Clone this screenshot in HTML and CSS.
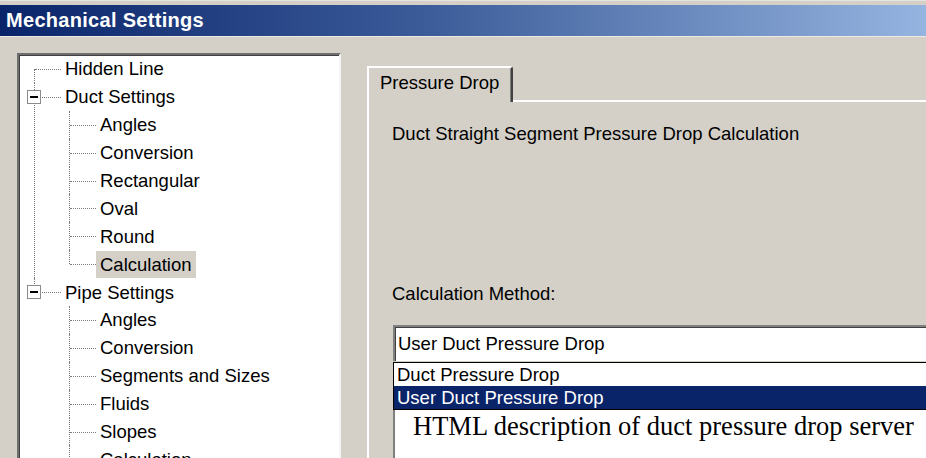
FILE: index.html
```html
<!DOCTYPE html>
<html>
<head>
<meta charset="utf-8">
<link rel="stylesheet" href="styles.css">
</head>
<body>
<div class="window">
  <div class="titlebar">Mechanical Settings</div>
  <div class="content">
    <div class="treebox">
      <ul class="tree">
        <li class="first"><div class="row"><span class="label">Hidden Line</span></div></li>
        <li>
          <div class="row open"><span class="toggle"></span><span class="label">Duct Settings</span></div>
          <ul>
            <li><div class="row"><span class="label">Angles</span></div></li>
            <li><div class="row"><span class="label">Conversion</span></div></li>
            <li><div class="row"><span class="label">Rectangular</span></div></li>
            <li><div class="row"><span class="label">Oval</span></div></li>
            <li><div class="row"><span class="label">Round</span></div></li>
            <li class="last"><div class="row"><span class="label selected">Calculation</span></div></li>
          </ul>
        </li>
        <li class="last">
          <div class="row open"><span class="toggle"></span><span class="label">Pipe Settings</span></div>
          <ul>
            <li><div class="row"><span class="label">Angles</span></div></li>
            <li><div class="row"><span class="label">Conversion</span></div></li>
            <li><div class="row"><span class="label">Segments and Sizes</span></div></li>
            <li><div class="row"><span class="label">Fluids</span></div></li>
            <li><div class="row"><span class="label">Slopes</span></div></li>
            <li><div class="row"><span class="label">Calculation</span></div></li>
          </ul>
        </li>
      </ul>
    </div>
    <div class="tabs">
      <div class="tabstrip">
        <div class="tab">Pressure Drop</div>
      </div>
      <div class="panel">
        <div class="heading">Duct Straight Segment Pressure Drop Calculation</div>
        <div class="method-label">Calculation Method:</div>
        <div class="combo">User Duct Pressure Drop</div>
        <div class="dropdown">
          <div class="option">Duct Pressure Drop</div>
          <div class="option active">User Duct Pressure Drop</div>
        </div>
        <div class="description">HTML description of duct pressure drop server</div>
      </div>
    </div>
  </div>
</div>
</body>
</html>
```
FILE: styles.css
```css
html, body {
  margin: 0;
  padding: 0;
  background: #d4d0c8;
}
body {
  width: 926px;
  height: 458px;
  overflow: hidden;
  font-family: "Liberation Sans", Arial, sans-serif;
  font-size: 18.5px;
  color: #000;
}
.window {
  width: 926px;
  height: 458px;
  overflow: hidden;
  padding-top: 5px;
  box-sizing: border-box;
  background: #d4d0c8;
  border-top: 1px solid #e6e4de;
}
.titlebar {
  height: 31px;
  line-height: 31px;
  padding-left: 6px;
  margin-top: -1px;
  background: linear-gradient(to right, #0a246a 0%, #3a5a98 45%, #95b4e0 100%);
  color: #fff;
  font-weight: bold;
  font-size: 20px;
  letter-spacing: 0.3px;
  border-bottom: 1px solid #ece9e2;
}
.content {
  display: flex;
  padding: 16px 0 0 17px;
}
.treebox {
  flex: none;
  width: 324px;
  height: 430px;
  box-sizing: border-box;
  background: #fff;
  border-top: 2px solid #6e6e6e;
  border-left: 2px solid #6e6e6e;
  border-right: 2px solid #f4f4f4;
  box-shadow: inset 1px 1px 0 #404040;
}
.tree, .tree ul {
  list-style: none;
  margin: 0;
}
.tree {
  padding: 0;
}
.tree ul {
  padding: 0 0 0 35px;
}
.tree li {
  position: relative;
}
.tree li::before {
  content: "";
  position: absolute;
  left: 15px;
  top: 0;
  bottom: 0;
  border-left: 1px dotted #7a7a7a;
}
.tree > li.first::before {
  top: 14px;
}
.tree li.last::before {
  bottom: auto;
  height: 14px;
}
.row {
  position: relative;
  height: 27.9px;
  display: flex;
  align-items: center;
  padding-left: 42px;
}
.row::after {
  content: "";
  position: absolute;
  left: 16px;
  width: 26px;
  top: 14px;
  border-top: 1px dotted #7a7a7a;
}
.row.open::after {
  left: 23px;
  width: 19px;
}
.toggle {
  position: absolute;
  left: 8px;
  top: 7px;
  width: 14px;
  height: 14px;
  box-sizing: border-box;
  border: 1px solid #8a8a8a;
  background: #fff;
  z-index: 1;
}
.toggle::after {
  content: "";
  position: absolute;
  left: 2px;
  right: 2px;
  top: 5px;
  height: 2px;
  background: #000;
}
.label {
  padding: 0 4px;
  line-height: 27px;
  white-space: nowrap;
}
.label.selected {
  background: #d4d0c8;
}
.tabs {
  flex: none;
  width: 620px;
  margin-left: 26px;
  margin-top: 13px;
}
.tabstrip {
  display: flex;
}
.tab {
  position: relative;
  width: 146px;
  height: 36px;
  margin-bottom: -2px;
  box-sizing: border-box;
  padding-left: 11px;
  line-height: 30px;
  background: #d4d0c8;
  border-top: 2px solid #fff;
  border-left: 2px solid #fff;
  border-right: 2px solid #404040;
  border-top-right-radius: 3px;
  box-shadow: inset -1px 0 0 #808080;
}
.panel {
  height: 400px;
  box-sizing: border-box;
  border-top: 2px solid #fff;
  border-left: 2px solid #fff;
  padding: 21px 0 0 23px;
}
.heading {
  line-height: 22px;
  white-space: nowrap;
}
.method-label {
  margin-top: 138px;
  line-height: 22px;
}
.combo {
  margin: 20px 0 0 1px;
  height: 36px;
  box-sizing: border-box;
  background: #fff;
  border-top: 2px solid #808080;
  border-left: 2px solid #808080;
  box-shadow: inset 1px 1px 0 #404040;
  padding-left: 3px;
  line-height: 34px;
  white-space: nowrap;
}
.dropdown {
  margin: 1px 0 0 1px;
  border: 1px solid #000;
  background: #fff;
}
.option {
  height: 23px;
  line-height: 23px;
  padding-left: 3px;
  white-space: nowrap;
}
.option.active {
  background: #0a246a;
  color: #fff;
}
.description {
  margin-left: 1px;
  height: 80px;
  background: #fff;
  border-left: 2px solid #808080;
  padding-left: 18px;
  font-family: "Liberation Serif", "Times New Roman", serif;
  font-size: 26.5px;
  line-height: 32px;
  white-space: nowrap;
}
```
